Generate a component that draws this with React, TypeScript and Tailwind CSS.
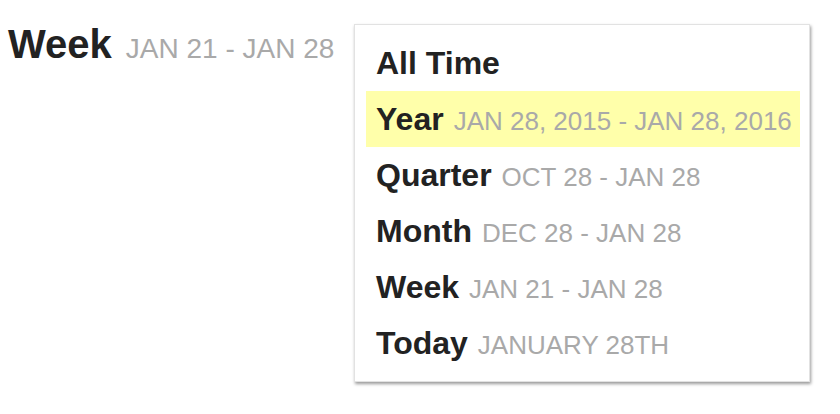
import React from "react";

const rows: { label: string; sub?: string; active?: boolean }[] = [
  { label: "All Time" },
  { label: "Year", sub: "JAN 28, 2015 - JAN 28, 2016", active: true },
  { label: "Quarter", sub: "OCT 28 - JAN 28" },
  { label: "Month", sub: "DEC 28 - JAN 28" },
  { label: "Week", sub: "JAN 21 - JAN 28" },
  { label: "Today", sub: "JANUARY 28TH" },
];

export default function App() {
  return (
    <div
      className="w-[840px] h-[414px] bg-white flex items-start pt-[24px]"
      style={{ fontFamily: '"Liberation Sans", Arial, sans-serif' }}
    >
      <div className="w-[354px] shrink-0 pl-[8px] flex items-baseline gap-[14px] whitespace-nowrap">
        <span className="text-[40px] leading-none font-bold text-[#222222]">Week</span>
        <span className="text-[28px] leading-none text-[#a9a9a9]">JAN 21 - JAN 28</span>
      </div>
      <div className="w-[456px] shrink-0 bg-white border border-[#e2e2e2] shadow-[1px_2px_3px_rgba(0,0,0,0.4)] pl-[11px] pr-[9px] pt-[10px] pb-[10px] flex flex-col">
        {rows.map((r) => (
          <div
            key={r.label}
            className={
              "h-[56px] flex items-center pl-[10px] whitespace-nowrap " +
              (r.active ? "bg-[#ffffaa]" : "")
            }
          >
            <div className="flex items-baseline gap-[10px]">
              <span className="text-[32px] leading-none font-bold text-[#222222]">{r.label}</span>
              {r.sub && (
                <span className="text-[26px] leading-none text-[#a9a9a9]">{r.sub}</span>
              )}
            </div>
          </div>
        ))}
      </div>
    </div>
  );
}
